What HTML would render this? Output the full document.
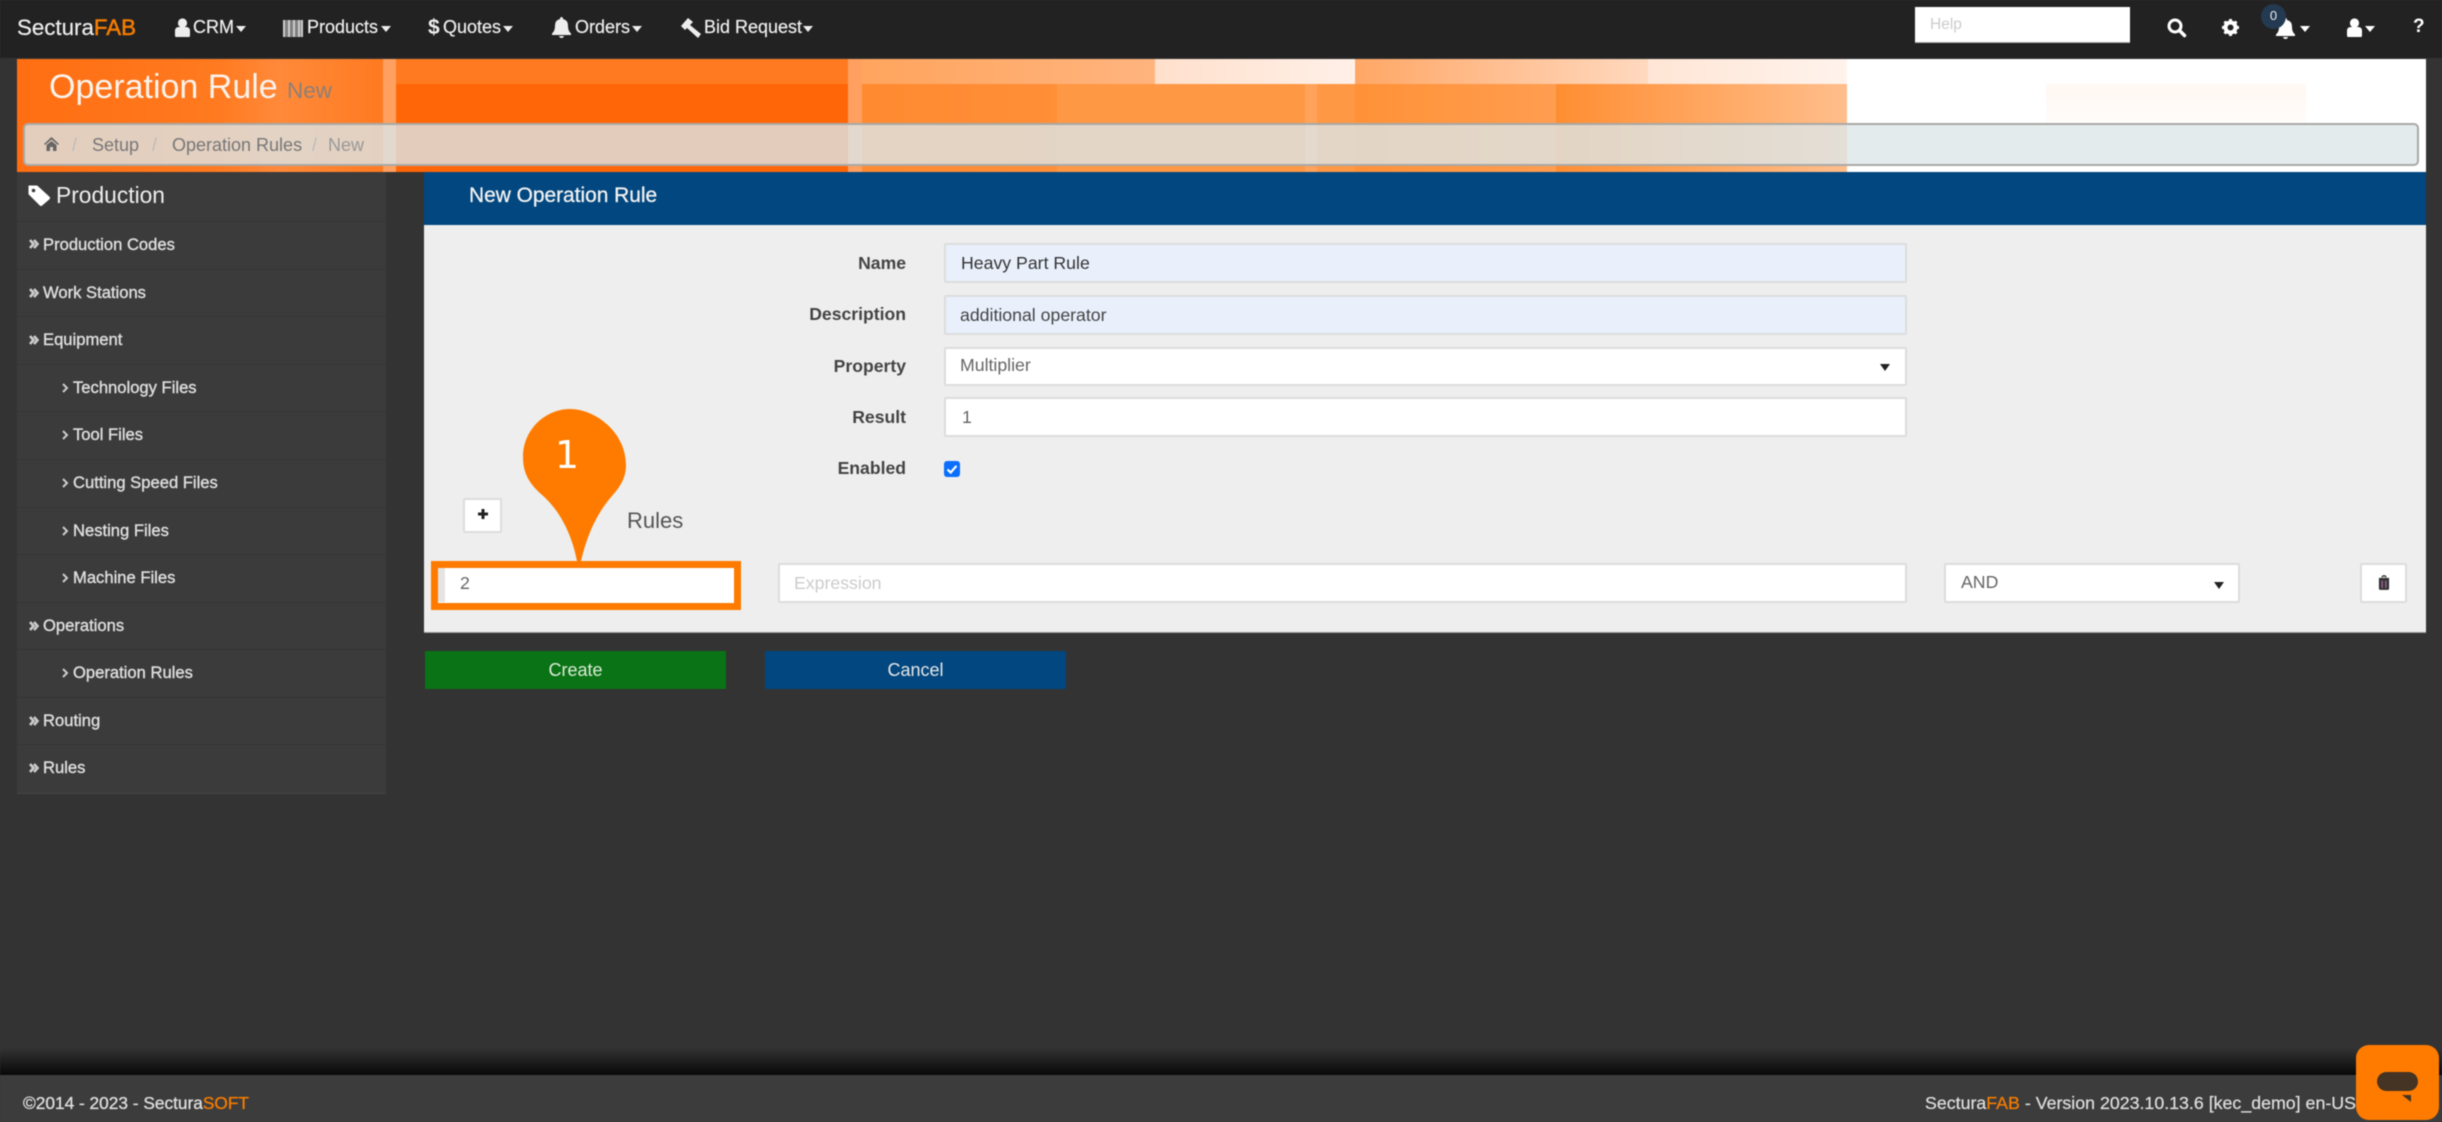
<!DOCTYPE html>
<html><head><meta charset="utf-8"><title>Operation Rule</title>
<style>
html,body{margin:0;padding:0;width:2442px;height:1122px;overflow:hidden;background:#333}
#p{position:absolute;left:0;top:0;width:2442px;height:1122px;overflow:hidden;background:#333;font-family:"Liberation Sans",sans-serif;filter:blur(.55px)}
.b{position:absolute}
.t{position:absolute;white-space:nowrap;line-height:30px;height:30px}
.nav{font-size:18px;color:#eee;top:12px;-webkit-text-stroke:.2px #eee}
.car{position:absolute;width:0;height:0;border-left:5px solid transparent;border-right:5px solid transparent;border-top:6px solid #eee;top:26px}
.row{position:absolute;left:17px;width:369px;height:47px;border-bottom:1px solid #353535}
.s{font-size:16.6px;color:#ddd;-webkit-text-stroke:.4px #ddd;margin-top:1px}
.lab{font-size:17.6px;font-weight:bold;color:#444;text-align:right;right:1536px}
.inp{position:absolute;box-sizing:border-box;background:#fff;border:2px solid #ddd;border-radius:2px}
.val{font-size:17.7px;color:#444}
svg{position:absolute;overflow:visible}
</style></head><body><div id="p">

<!-- top nav -->
<div class="b" style="left:0;top:0;width:2442px;height:58px;background:#222"></div>
<div class="t" style="left:17px;top:13px;font-size:22.3px;color:#eee;-webkit-text-stroke:.2px #eee">Sectura<span style="color:#f57c00;-webkit-text-stroke:.5px #f57c00">FAB</span></div>

<svg style="left:175px;top:18px" width="15" height="19" viewBox="0 0 15 19"><circle cx="7.5" cy="5" r="4.6" fill="#eee"/><path d="M1 19Q0 19 0 17V13Q0 9 4 9H11Q15 9 15 13V17Q15 19 14 19Z" fill="#eee"/></svg>
<div class="t nav" style="left:193px">CRM</div><div class="car" style="left:236px"></div>

<svg style="left:283px;top:20px" width="20" height="17" viewBox="0 0 20 17" fill="#ccc"><rect x="0" width="20" height="17" opacity=".55"/><rect x="0" width="2" height="17"/><rect x="5" width="2" height="17"/><rect x="10" width="2" height="17"/><rect x="15" width="2" height="17"/><rect x="18" width="2" height="17"/></svg>
<div class="t nav" style="left:307px">Products</div><div class="car" style="left:381px"></div>

<div class="t" style="left:428px;top:13px;font-size:21px;font-weight:bold;color:#eee">$</div>
<div class="t nav" style="left:443px">Quotes</div><div class="car" style="left:503px"></div>

<svg style="left:552px;top:17px" width="19" height="21" viewBox="0 0 19 21"><path d="M9.5 0Q11 0 11 2Q16 3 16 9Q16 14 19 16.5V18H0V16.5Q3 14 3 9Q3 3 8 2Q8 0 9.500 0Z" fill="#eee"/><path d="M7 19H12Q11.500 21 9.500 21Q7.500 21 7 19Z" fill="#eee"/></svg>
<div class="t nav" style="left:575px">Orders</div><div class="car" style="left:632px"></div>

<svg style="left:681px;top:18px" width="20" height="20" viewBox="0 0 20 20"><path d="M0 8L7 0L12 4L9 7L20 16L17 20L6 10L4 12Z" fill="#eee"/></svg>
<div class="t nav" style="left:704px">Bid Request</div><div class="car" style="left:803px"></div>

<!-- right nav -->
<div class="b" style="left:1915px;top:7px;width:215px;height:35px;background:#fff;border-bottom:1px solid #aaa"></div>
<div class="t" style="left:1930px;top:10px;font-size:15.5px;color:#ccc">Help</div>
<svg style="left:2167px;top:18px" width="19" height="19" viewBox="0 0 19 19"><circle cx="8" cy="8" r="6" fill="none" stroke="#fff" stroke-width="3"/><path d="M12.500 12.500L17.500 17.500" stroke="#fff" stroke-width="3.500" stroke-linecap="round"/></svg>
<svg style="left:2222px;top:19px" width="17" height="17" viewBox="0 0 17 17"><circle cx="8.500" cy="8.500" r="5" fill="none" stroke="#fff" stroke-width="4"/><path d="M8.500 0V3M8.500 14V17M0 8.500H3M14 8.500H17M2.500 2.500L4.500 4.500M12.500 12.500L14.500 14.500M2.500 14.500L4.500 12.500M12.500 4.500L14.500 2.500" stroke="#fff" stroke-width="3"/></svg>
<svg style="left:2276px;top:18px" width="19" height="21" viewBox="0 0 19 21"><path d="M9.500 0Q11 0 11 2Q16 3 16 9Q16 14 19 16.500V18H0V16.500Q3 14 3 9Q3 3 8 2Q8 0 9.500 0Z" fill="#fff"/><path d="M7 19H12Q11.500 21 9.500 21Q7.500 21 7 19Z" fill="#fff"/></svg>
<div class="b" style="left:2261px;top:4px;width:25px;height:25px;border-radius:50%;background:#233a52"></div>
<div class="t" style="left:2261px;top:1px;width:25px;text-align:center;font-size:13px;color:#eee">0</div>
<div class="car" style="left:2300px;top:26px;border-top-color:#fff"></div>
<svg style="left:2347px;top:18px" width="15" height="19" viewBox="0 0 15 19"><circle cx="7.500" cy="5" r="4.600" fill="#fff"/><path d="M1 19Q0 19 0 17V13Q0 9 4 9H11Q15 9 15 13V17Q15 19 14 19Z" fill="#fff"/></svg>
<div class="car" style="left:2365px;top:26px;border-top-color:#fff"></div>
<div class="t" style="left:2413px;top:12px;font-size:19px;font-weight:bold;color:#fff">?</div>

<!-- banner: x offsets relative to 17 -->
<div class="b" style="left:17px;top:59px;width:2409px;height:113px;background:#fff;overflow:hidden">
  <div class="b" style="left:0;top:0;width:831px;height:113px;background:#ff6608"></div>
  <div class="b" style="left:0;top:0;width:366px;height:113px;background:linear-gradient(90deg,#ff6e12 0,#ff7a20 55%,#ff8a3a 72%,#ff7a20 100%)"></div>
  <div class="b" style="left:366px;top:0;width:13px;height:113px;background:#ffa060"></div>
  <div class="b" style="left:379px;top:0;width:452px;height:25px;background:#ff7a20"></div>
  <div class="b" style="left:831px;top:0;width:14px;height:113px;background:#ffa060"></div>
  <div class="b" style="left:845px;top:0;width:293px;height:25px;background:linear-gradient(90deg,#ffa55e,#ffb47e)"></div>
  <div class="b" style="left:1138px;top:0;width:200px;height:25px;background:linear-gradient(90deg,#ffe0cc,#fff0e8)"></div>
  <div class="b" style="left:1338px;top:0;width:293px;height:25px;background:linear-gradient(90deg,#ffa766,#ffd9bf)"></div>
  <div class="b" style="left:1631px;top:0;width:199px;height:25px;background:linear-gradient(90deg,#ffe6d6,#fff3ec)"></div>
  <div class="b" style="left:845px;top:25px;width:195px;height:88px;background:linear-gradient(90deg,#ff8a30,#ff8f38)"></div>
  <div class="b" style="left:1040px;top:25px;width:298px;height:88px;background:#ff9844"></div>
  <div class="b" style="left:1288px;top:25px;width:12px;height:88px;background:#ffa35a"></div>
  <div class="b" style="left:1338px;top:25px;width:201px;height:88px;background:linear-gradient(90deg,#ff9238,#ff9d50)"></div>
  <div class="b" style="left:1539px;top:25px;width:291px;height:88px;background:linear-gradient(90deg,#ff8e32,#ffbe8c)"></div>
  <div class="b" style="left:2029px;top:25px;width:260px;height:60px;background:linear-gradient(180deg,#fff8f3,#fffefd)"></div>
</div>
<div class="t" style="left:49px;top:72px;font-size:34px;color:#fbf3ec">Operation Rule</div>
<div class="t" style="left:287px;top:76px;font-size:22.5px;color:#8b8079">New</div>

<!-- breadcrumb -->
<div class="b" style="left:23px;top:123px;width:2396px;height:43px;box-sizing:border-box;background:rgba(220,230,232,.8);border:2px solid #a9a9a6;border-radius:5px"></div>
<svg style="left:44px;top:137px" width="15" height="14" viewBox="0 0 15 14"><path d="M7.500 0L15 7L14 8L7.500 2.500L1 8L0 7ZM2.500 8L7.500 4L12.500 8V14H9V10H6V14H2.500Z" fill="#666"/></svg>
<div class="t" style="left:72px;top:130px;font-size:18px;color:#bbb">/</div>
<div class="t" style="left:92px;top:130px;font-size:18px;color:#777">Setup</div>
<div class="t" style="left:152px;top:130px;font-size:18px;color:#bbb">/</div>
<div class="t" style="left:172px;top:130px;font-size:18px;color:#777">Operation Rules</div>
<div class="t" style="left:312px;top:130px;font-size:18px;color:#bbb">/</div>
<div class="t" style="left:328px;top:130px;font-size:18px;color:#999">New</div>

<!-- sidebar -->
<div class="b" style="left:17px;top:172px;width:369px;height:621px;background:#3b3b3b;border-bottom:1px solid #444"></div>
<div class="row" style="top:174px"></div>
<div class="row" style="top:222px"></div><div class="row" style="top:269px"></div><div class="row" style="top:317px"></div><div class="row" style="top:364px"></div><div class="row" style="top:412px"></div><div class="row" style="top:460px"></div><div class="row" style="top:507px"></div><div class="row" style="top:555px"></div><div class="row" style="top:602px"></div><div class="row" style="top:650px"></div><div class="row" style="top:697px"></div>

<svg style="left:28px;top:185px" width="22" height="21" viewBox="0 0 22 21"><path d="M1 1H9L21 12Q22 13 21 14L14 20Q13 21 12 20L1 9Z" fill="#fff" stroke="#fff" stroke-linejoin="round"/><circle cx="5.500" cy="5.500" r="1.800" fill="#3b3b3b"/></svg>
<div class="t" style="left:56px;top:180px;font-size:22.8px;color:#eee">Production</div>

<svg style="left:29px;top:239px" width="10" height="10" viewBox="0 0 10 10"><path d="M1 1L4.500 5L1 9M5 1L8.500 5L5 9" fill="none" stroke="#ccc" stroke-width="2.600"/></svg>
<div class="t s" style="left:43px;top:229px">Production Codes</div>
<svg style="left:29px;top:288px" width="10" height="10" viewBox="0 0 10 10"><path d="M1 1L4.500 5L1 9M5 1L8.500 5L5 9" fill="none" stroke="#ccc" stroke-width="2.600"/></svg>
<div class="t s" style="left:43px;top:277px">Work Stations</div>
<svg style="left:29px;top:335px" width="10" height="10" viewBox="0 0 10 10"><path d="M1 1L4.500 5L1 9M5 1L8.500 5L5 9" fill="none" stroke="#ccc" stroke-width="2.600"/></svg>
<div class="t s" style="left:43px;top:324px">Equipment</div>

<svg style="left:62px;top:383px" width="7" height="10" viewBox="0 0 7 10"><path d="M1 1L5 5L1 9" fill="none" stroke="#ccc" stroke-width="2"/></svg>
<div class="t s" style="left:73px;top:372px">Technology Files</div>
<svg style="left:62px;top:430px" width="7" height="10" viewBox="0 0 7 10"><path d="M1 1L5 5L1 9" fill="none" stroke="#ccc" stroke-width="2"/></svg>
<div class="t s" style="left:73px;top:419px">Tool Files</div>
<svg style="left:62px;top:478px" width="7" height="10" viewBox="0 0 7 10"><path d="M1 1L5 5L1 9" fill="none" stroke="#ccc" stroke-width="2"/></svg>
<div class="t s" style="left:73px;top:467px">Cutting Speed Files</div>
<svg style="left:62px;top:526px" width="7" height="10" viewBox="0 0 7 10"><path d="M1 1L5 5L1 9" fill="none" stroke="#ccc" stroke-width="2"/></svg>
<div class="t s" style="left:73px;top:515px">Nesting Files</div>
<svg style="left:62px;top:573px" width="7" height="10" viewBox="0 0 7 10"><path d="M1 1L5 5L1 9" fill="none" stroke="#ccc" stroke-width="2"/></svg>
<div class="t s" style="left:73px;top:562px">Machine Files</div>
<svg style="left:29px;top:621px" width="10" height="10" viewBox="0 0 10 10"><path d="M1 1L4.500 5L1 9M5 1L8.500 5L5 9" fill="none" stroke="#ccc" stroke-width="2.600"/></svg>
<div class="t s" style="left:43px;top:610px">Operations</div>
<svg style="left:62px;top:668px" width="7" height="10" viewBox="0 0 7 10"><path d="M1 1L5 5L1 9" fill="none" stroke="#ccc" stroke-width="2"/></svg>
<div class="t s" style="left:73px;top:657px">Operation Rules</div>
<svg style="left:29px;top:716px" width="10" height="10" viewBox="0 0 10 10"><path d="M1 1L4.500 5L1 9M5 1L8.500 5L5 9" fill="none" stroke="#ccc" stroke-width="2.600"/></svg>
<div class="t s" style="left:43px;top:705px">Routing</div>
<svg style="left:29px;top:763px" width="10" height="10" viewBox="0 0 10 10"><path d="M1 1L4.500 5L1 9M5 1L8.500 5L5 9" fill="none" stroke="#ccc" stroke-width="2.600"/></svg>
<div class="t s" style="left:43px;top:752px">Rules</div>

<!-- main panel -->
<div class="b" style="left:424px;top:172px;width:2002px;height:53px;background:#02477f"></div>
<div class="t" style="left:469px;top:181px;font-size:20.9px;color:#f2f2f2;-webkit-text-stroke:.3px #f2f2f2">New Operation Rule</div>
<div class="b" style="left:424px;top:225px;width:2002px;height:407px;background:#eee;border-bottom:1px solid #999"></div>

<div class="t lab" style="top:248px">Name</div>
<div class="t lab" style="top:299px">Description</div>
<div class="t lab" style="top:351px">Property</div>
<div class="t lab" style="top:402px">Result</div>
<div class="t lab" style="top:453px">Enabled</div>

<div class="inp" style="left:944px;top:243px;width:963px;height:40px;background:#e9f0fc"></div>
<div class="t val" style="left:961px;top:248px;color:#333">Heavy Part Rule</div>
<div class="inp" style="left:944px;top:295px;width:963px;height:40px;background:#e9f0fc"></div>
<div class="t val" style="left:960px;top:300px;color:#444">additional operator</div>
<div class="inp" style="left:944px;top:347px;width:963px;height:39px"></div>
<div class="t val" style="left:960px;top:350px;color:#666">Multiplier</div>
<div class="b" style="left:1880px;top:364px;width:0;height:0;border-left:5px solid transparent;border-right:5px solid transparent;border-top:7px solid #222"></div>
<div class="inp" style="left:944px;top:397px;width:963px;height:40px"></div>
<div class="t val" style="left:962px;top:402px;color:#666">1</div>

<div class="b" style="left:944px;top:461px;width:16px;height:16px;background:#0b6efd;border-radius:3px"></div>
<svg style="left:944px;top:461px" width="16" height="16" viewBox="0 0 16 16"><path d="M3.500 8.500L6.700 11.500L12.500 4.800" fill="none" stroke="#fff" stroke-width="2.200"/></svg>

<div class="inp" style="left:463px;top:498px;width:39px;height:35px"></div>
<svg style="left:478px;top:509px" width="10" height="10" viewBox="0 0 10 10"><path d="M5 0V10M0 5H10" stroke="#222" stroke-width="3"/></svg>
<div class="t" style="left:627px;top:506px;font-size:22px;color:#555">Rules</div>

<!-- rule row -->
<div class="inp" style="left:778px;top:563px;width:1129px;height:40px"></div>
<div class="t val" style="left:794px;top:568px;color:#ccc">Expression</div>
<div class="inp" style="left:1944px;top:563px;width:296px;height:40px"></div>
<div class="t val" style="left:1961px;top:567px;color:#666">AND</div>
<div class="b" style="left:2214px;top:582px;width:0;height:0;border-left:5px solid transparent;border-right:5px solid transparent;border-top:7px solid #222"></div>
<div class="inp" style="left:2360px;top:563px;width:47px;height:40px"></div>
<svg style="left:2378px;top:575px" width="12" height="15" viewBox="0 0 13 16"><path d="M4.500 2.500Q4.500 .8 6.500 .8Q8.500 .8 8.500 2.500" fill="none" stroke="#333" stroke-width="1.500"/><path d="M1 3H12V14.500Q12 16 10.500 16H2.500Q1 16 1 14.500Z" fill="#333"/><path d="M4.500 6V14M8.500 6V14" stroke="#a0659a" stroke-width="1.500"/></svg>

<!-- highlighted input -->
<div class="b" style="left:431px;top:561px;width:310px;height:49px;box-sizing:border-box;border:7px solid #ff7b00;background:#fff"></div>
<div class="b" style="left:438px;top:568px;width:7px;height:34px;background:#e4e4e4"></div>
<div class="t val" style="left:460px;top:568px;color:#666">2</div>

<!-- callout pin -->
<svg style="left:0;top:0" width="2442" height="1122" viewBox="0 0 2442 1122"><path d="M570 409C595 409 626 432 626 465C626 478 620 487 612 496C597 513 587 535 581 561H577C572 535 560 510 541 494C530 484 523 474 523 457C523 430 545 409 570 409Z" fill="#ff7b00"/></svg>
<div class="t" style="left:547px;top:440px;width:40px;text-align:center;font-family:'DejaVu Sans',sans-serif;font-size:38px;color:#fff;line-height:30px">1</div>

<!-- buttons -->
<div class="b" style="left:425px;top:651px;width:301px;height:38px;background:#0a7315"></div>
<div class="t" style="left:425px;top:655px;width:301px;text-align:center;font-size:18px;color:#dcebd8">Create</div>
<div class="b" style="left:765px;top:651px;width:301px;height:38px;background:#02477f"></div>
<div class="t" style="left:765px;top:655px;width:301px;text-align:center;font-size:18px;color:#e6e6e6">Cancel</div>

<!-- footer -->
<div class="b" style="left:0;top:1048px;width:2442px;height:27px;background:linear-gradient(180deg,rgba(0,0,0,0),rgba(0,0,0,.85))"></div>
<div class="b" style="left:0;top:1075px;width:2442px;height:47px;background:#3c3c3c"></div>
<div class="t" style="left:23px;top:1088px;font-size:17.3px;color:#ddd;-webkit-text-stroke:.35px #ddd">©2014 - 2023 - Sectura<span style="color:#f57c00;-webkit-text-stroke:.35px #f57c00">SOFT</span></div>
<div class="t" style="left:1925px;top:1088px;font-size:17.8px;color:#ddd;-webkit-text-stroke:.25px #ddd">Sectura<span style="color:#f57c00;-webkit-text-stroke:.25px #f57c00">FAB</span> - Version 2023.10.13.6 [kec_demo] en-US</div>

<div class="b" style="left:2356px;top:1045px;width:83px;height:75px;background:#ff7b00;border-radius:13px"></div>
<div class="b" style="left:2377px;top:1072px;width:41px;height:19px;background:#453323;border-radius:10px"></div>
<svg style="left:2402px;top:1095px" width="9" height="7" viewBox="0 0 9 7"><path d="M0 0H9V7Z" fill="#453323"/></svg>

</div></body></html>
